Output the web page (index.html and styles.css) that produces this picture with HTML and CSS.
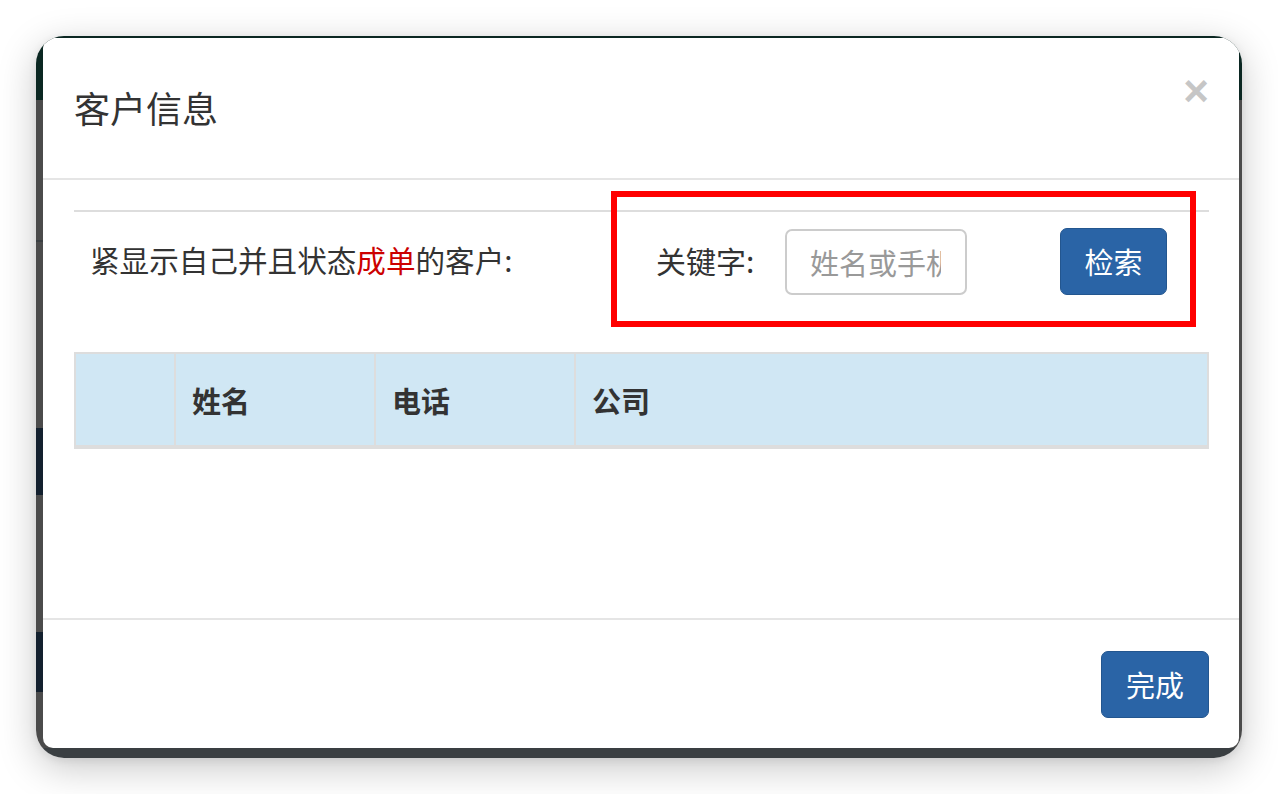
FILE: index.html
```html
<!DOCTYPE html>
<html lang="zh-CN">
<head>
<meta charset="utf-8">
<title>客户信息</title>
<link rel="stylesheet" href="styles.css">
</head>
<body>
<div class="shot">
  <div class="window">
    <div class="modal">
      <div class="modal-header">
        <h4 class="modal-title">客户信息</h4>
        <button class="close" type="button">×</button>
      </div>
      <div class="modal-body">
        <hr class="rule">
        <div class="search-row">
          <p class="hint">紧显示自己并且状态<span class="em">成单</span>的客户:</p>
          <label class="kw-label">关键字:</label>
          <input class="kw-input" type="text" placeholder="姓名或手机">
          <button class="btn search-btn" type="button">检索</button>
        </div>
        <table class="grid">
          <thead>
            <tr>
              <th class="c0"></th>
              <th class="c1">姓名</th>
              <th class="c2">电话</th>
              <th class="c3">公司</th>
            </tr>
          </thead>
        </table>
      </div>
      <div class="modal-footer">
        <button class="btn done-btn" type="button">完成</button>
      </div>
    </div>
    <div class="annotate"></div>
  </div>
</div>
</body>
</html>
```

FILE: styles.css
```css
html, body {
  margin: 0;
  padding: 0;
  background: #ffffff;
}

body {
  font-family: "Noto Sans CJK SC", "Liberation Sans", sans-serif;
  color: #333333;
}

.shot {
  padding: 36px;
  width: 1206px;
  height: 722px;
}

.window {
  position: relative;
  box-sizing: border-box;
  width: 1206px;
  height: 722px;
  padding: 2px 3px 10px 7px;
  border-radius: 28px;
  overflow: hidden;
  box-shadow: 0 10px 38px rgba(0, 0, 0, 0.22), 0 2px 8px rgba(0, 0, 0, 0.08);
  background:
    linear-gradient(#13202e, #13202e) left 0 top 392px / 7px 67px no-repeat,
    linear-gradient(#13202e, #13202e) left 0 top 596px / 7px 60px no-repeat,
    linear-gradient(#3a3f42, #3a3f42) left 0 top 204px / 7px 2px no-repeat,
    linear-gradient(#3a3f42, #3a3f42) left 0 bottom 0 / 100% 10px no-repeat,
    linear-gradient(#0b2722 0, #0b2722 64px, #4b4b4b 64px);
}

.modal {
  width: 1196px;
  height: 710px;
  background: #ffffff;
  border-radius: 10px;
  overflow: hidden;
  display: flex;
  flex-direction: column;
}

.modal-header {
  height: 140px;
  flex: 0 0 auto;
  border-bottom: 2px solid #e5e5e5;
  display: flex;
  align-items: center;
  justify-content: space-between;
  padding: 0 30px 0 31px;
}

.modal-title {
  margin: 0;
  font-size: 36px;
  font-weight: 400;
  line-height: 1.1;
  color: #333333;
}

.close {
  align-self: flex-start;
  margin-top: 31px;
  padding: 0;
  border: 0;
  background: transparent;
  font-family: "Liberation Sans", Arial, sans-serif;
  font-weight: 700;
  font-size: 44px;
  line-height: 1;
  color: #c6c6c6;
}

.modal-body {
  height: 438px;
  box-sizing: border-box;
  padding: 30px 30px 0 31px;
  flex: 0 0 auto;
}

.rule {
  margin: 0;
  border: 0;
  border-top: 2px solid #dddddd;
}

.search-row {
  margin-top: 16px;
  height: 67px;
  display: flex;
  align-items: center;
}

.hint {
  margin: 0;
  flex: 0 0 582px;
  box-sizing: border-box;
  padding: 0 0 4px 16px;
  font-size: 29.6px;
  line-height: 1.2;
  color: #333333;
}

.em {
  color: #cc0000;
}

.kw-label {
  flex: 0 0 129px;
  padding-bottom: 4px;
  font-size: 30px;
  line-height: 1.2;
  color: #333333;
}

.kw-input {
  flex: 0 0 auto;
  box-sizing: border-box;
  width: 182px;
  height: 66px;
  margin: 0 93px 0 0;
  padding: 0 24px 0 23px;
  border: 2px solid #cccccc;
  border-radius: 7px;
  font-family: "Noto Sans CJK SC", sans-serif;
  font-size: 29px;
  color: #555555;
  background: #ffffff;
  outline: none;
}

.kw-input::placeholder {
  color: #999999;
}

.btn {
  box-sizing: border-box;
  padding: 0;
  border: 1px solid #23568f;
  border-radius: 7px;
  background: #2a64a6;
  color: #ffffff;
  font-family: "Noto Sans CJK SC", sans-serif;
  font-size: 29px;
  line-height: 1;
}

.search-btn {
  width: 107px;
  height: 67px;
}

.grid {
  margin-top: 57px;
  width: 100%;
  border-collapse: collapse;
  border: 2px solid #dddddd;
}

.grid th {
  height: 91px;
  padding: 0 16px;
  background: #d0e7f4;
  border: 2px solid #dddddd;
  border-bottom-width: 4px;
  text-align: left;
  font-size: 29px;
  font-weight: 700;
  color: #333333;
}

.grid .c0 { width: 100px; box-sizing: border-box; }
.grid .c1 { width: 200px; box-sizing: border-box; }
.grid .c2 { width: 200px; box-sizing: border-box; }

.modal-footer {
  flex: 1 1 auto;
  border-top: 2px solid #e5e5e5;
  display: flex;
  align-items: center;
  justify-content: flex-end;
  padding: 0 30px 0 31px;
}

.done-btn {
  width: 108px;
  height: 67px;
}

.annotate {
  position: absolute;
  left: 575px;
  top: 155px;
  width: 585px;
  height: 136px;
  box-sizing: border-box;
  border: 6px solid #ff0000;
}
```
